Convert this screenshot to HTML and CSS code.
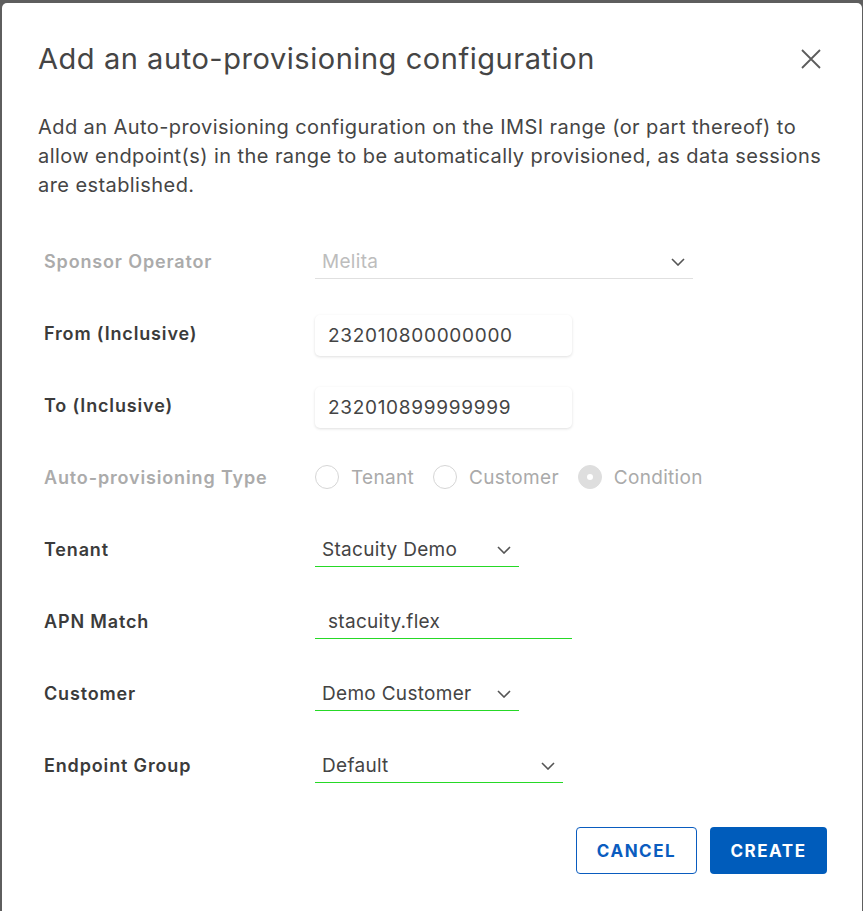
FILE: index.html
```html
<!DOCTYPE html>
<html>

<head>
    <title>Add an auto-provisioning configuration</title>
    <link rel="stylesheet" href="styles.css">
</head>

<body>
    <div class="modal">
        <div class="modalHeader">
            <h2>Add an auto-provisioning configuration</h2>
            <button class="btnClose" title="Close">
                <svg width="20" height="20" viewBox="0 0 20 20">
                    <path d="M1 1 L19 19 M19 1 L1 19" stroke="#5c5c5c" stroke-width="1.8" fill="none" />
                </svg>
            </button>
        </div>

        <p class="intro">Add an Auto-provisioning configuration on the IMSI range (or part thereof) to allow endpoint(s) in the range to be automatically provisioned, as data sessions are established.</p>

        <div class="formGrid">
            <label class="disabled">Sponsor Operator</label>
            <div class="select selectWide disabled">
                <span>Melita</span>
                <svg class="chevron" width="14" height="8" viewBox="0 0 14 8"><path d="M1 1 L7 7 L13 1" /></svg>
            </div>

            <label>From (Inclusive)</label>
            <div class="inputBox">232010800000000</div>

            <label>To (Inclusive)</label>
            <div class="inputBox">232010899999999</div>

            <label class="disabled">Auto-provisioning Type</label>
            <div class="radioGroup">
                <span class="radio"><i></i>Tenant</span>
                <span class="radio"><i></i>Customer</span>
                <span class="radio checked"><i></i>Condition</span>
            </div>

            <label>Tenant</label>
            <div class="select selectShort">
                <span>Stacuity Demo</span>
                <svg class="chevron" width="14" height="8" viewBox="0 0 14 8"><path d="M1 1 L7 7 L13 1" /></svg>
            </div>

            <label>APN Match</label>
            <div class="inputLine">stacuity.flex</div>

            <label>Customer</label>
            <div class="select selectShort">
                <span>Demo Customer</span>
                <svg class="chevron" width="14" height="8" viewBox="0 0 14 8"><path d="M1 1 L7 7 L13 1" /></svg>
            </div>

            <label>Endpoint Group</label>
            <div class="select selectMid">
                <span>Default</span>
                <svg class="chevron" width="14" height="8" viewBox="0 0 14 8"><path d="M1 1 L7 7 L13 1" /></svg>
            </div>
        </div>

        <div class="modalFooter">
            <button class="btnCancel">Cancel</button>
            <button class="btnCreate">Create</button>
        </div>
    </div>
</body>

</html>
```

FILE: styles.css
```css
html,
body {
    height: 100%;
}

body {
    margin: 0;
    background-color: #5e5e5e;
    font-family: Inter, "Noto Sans", sans-serif;
    color: #444;
    overflow: hidden;
}

.modal {
    margin: 3px 1px 0 2px;
    height: 908px;
    background-color: #fff;
    border-radius: 5px 5px 0 0;
    padding: 0 35px 0 34px;
    box-sizing: border-box;
}

.modalHeader {
    display: flex;
    align-items: center;
    justify-content: space-between;
    padding-top: 36px;
}

.modalHeader h2 {
    margin: 0;
    font-size: 29px;
    font-weight: 400;
    line-height: 40px;
    letter-spacing: 0.55px;
    color: #454545;
    padding-left: 2px;
}

.btnClose {
    background: none;
    border: none;
    padding: 0;
    margin-right: 6px;
    width: 20px;
    height: 20px;
    cursor: pointer;
}

.intro {
    margin: 34px -12px 0 2px;
    font-size: 20px;
    line-height: 29px;
    letter-spacing: 0.42px;
    color: #454545;
}

.formGrid {
    display: grid;
    grid-template-columns: 271px 1fr;
    grid-auto-rows: 72px;
    align-items: center;
    margin: 25px 0 0 8px;
}

.formGrid label {
    font-size: 18px;
    font-weight: 600;
    letter-spacing: 0.85px;
    color: #3b3b3b;
}

.formGrid label.disabled {
    color: #ababab;
}

/* underlined fields: text sits a touch low, line just under it */
.select,
.inputLine {
    height: 36px;
    padding-top: 2px;
    display: flex;
    align-items: center;
    justify-content: space-between;
    border-bottom: 1px solid #26d926;
    font-size: 19px;
    letter-spacing: 0.3px;
    color: #444;
    box-sizing: border-box;
}

.select {
    padding-left: 7px;
    padding-right: 8px;
}

.select.disabled {
    border-bottom-color: #e0e0e0;
    color: #bdbdbd;
}

.selectWide {
    width: 378px;
}

.selectShort {
    width: 204px;
}

.selectMid {
    width: 248px;
}

.chevron path {
    stroke: #555;
    stroke-width: 1.6;
    fill: none;
}

.inputLine {
    width: 257px;
    padding-left: 13px;
}

.inputBox {
    width: 257px;
    height: 41px;
    margin-top: 4px;
    display: flex;
    align-items: center;
    padding-left: 13px;
    box-sizing: border-box;
    border-radius: 5px;
    box-shadow: 0 1px 3px rgba(0, 0, 0, 0.13);
    font-size: 19px;
    letter-spacing: 0.7px;
    color: #444;
}

.radioGroup {
    display: flex;
    align-items: center;
    gap: 19px;
    font-size: 19px;
    letter-spacing: 0.3px;
    color: #aaa;
}

.radio {
    display: flex;
    align-items: center;
    gap: 12px;
}

.radio i {
    width: 22px;
    height: 22px;
    border: 1px solid #d6d6d6;
    border-radius: 50%;
    box-sizing: content-box;
    position: relative;
}

.radio.checked i {
    background-color: #dedede;
    border-color: #dedede;
}

.radio.checked i::after {
    content: "";
    position: absolute;
    left: 8px;
    top: 8px;
    width: 6px;
    height: 6px;
    border-radius: 50%;
    background-color: #fff;
}

.modalFooter {
    display: flex;
    justify-content: flex-end;
    gap: 13px;
    margin-top: 26px;
}

.modalFooter button {
    height: 47px;
    border-radius: 4px;
    font-family: inherit;
    font-size: 17px;
    font-weight: 700;
    letter-spacing: 1.5px;
    text-transform: uppercase;
    cursor: pointer;
}

.btnCancel {
    width: 121px;
    background-color: #fff;
    border: 1px solid #0a5cbf;
    color: #0a5cbf;
}

.btnCreate {
    width: 117px;
    background-color: #005cbb;
    border: none;
    color: #fff;
}
```
